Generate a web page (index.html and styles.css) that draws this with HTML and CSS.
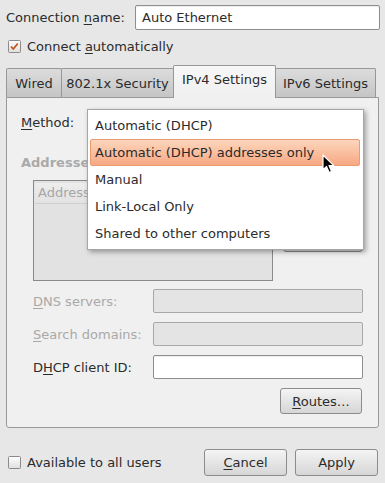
FILE: index.html
```html
<!DOCTYPE html>
<html>
<head>
<meta charset="utf-8">
<link rel="stylesheet" href="styles.css">
</head>
<body>
<div class="top">
  <div class="row-name">
    <span class="lbl">Connection <u>n</u>ame:</span>
    <div class="entry name-entry">Auto Ethernet</div>
  </div>
  <div class="row-check">
    <svg class="cb" width="13" height="13" viewBox="0 0 13 13">
      <defs><linearGradient id="g1" x1="0" y1="0" x2="0" y2="1"><stop offset="0" stop-color="#ffffff"/><stop offset="1" stop-color="#e2ddd8"/></linearGradient></defs>
      <rect x="0.5" y="0.5" width="12" height="12" rx="1" fill="url(#g1)" stroke="#8a8a8a"/>
      <path d="M3 6.5 L5.3 9 L9.8 3.5" fill="none" stroke="#c2561d" stroke-width="1.8"/>
    </svg>
    <span class="lbl">Connect <u>a</u>utomatically</span>
  </div>
  <div class="tabs">
    <div class="tab t1">Wired</div>
    <div class="tab t2">802.1x Security</div>
    <div class="tab t3 active">IPv4 Settings</div>
    <div class="tab t4">IPv6 Settings</div>
  </div>
  <div class="page">
    <div class="method-row"><span class="lbl"><u>M</u>ethod:</span></div>
    <div class="addr-label">Addresses</div>
    <div class="addr-area">
      <div class="addr-box">
        <div class="addr-head">Address</div>
      </div>
      <div class="addr-btns">
        <div class="btn small">Add</div>
        <div class="btn small">Delete</div>
      </div>
    </div>
    <div class="form-row"><span class="lbl dis"><u>D</u>NS servers:</span><div class="entry dis-entry"></div></div>
    <div class="form-row"><span class="lbl dis"><u>S</u>earch domains:</span><div class="entry dis-entry"></div></div>
    <div class="form-row"><span class="lbl">D<u>H</u>CP client ID:</span><div class="entry"></div></div>
    <div class="btn routes"><span><u>R</u>outes…</span></div>
  </div>
</div>
<div class="bottom">
  <svg class="cb" width="13" height="13" viewBox="0 0 13 13">
    <defs><linearGradient id="g2" x1="0" y1="0" x2="0" y2="1"><stop offset="0" stop-color="#ffffff"/><stop offset="1" stop-color="#dedede"/></linearGradient></defs>
    <rect x="0.5" y="0.5" width="12" height="12" rx="1" fill="url(#g2)" stroke="#8a8a8a"/>
  </svg>
  <span class="lbl avail">Available to all users</span>
  <div class="btn dlg cancel"><span><u>C</u>ancel</span></div>
  <div class="btn dlg apply"><span>Apply</span></div>
</div>

<div class="menu">
  <div class="item">Automatic (DHCP)</div>
  <div class="item hl">Automatic (DHCP) addresses only</div>
  <div class="item">Manual</div>
  <div class="item">Link-Local Only</div>
  <div class="item">Shared to other computers</div>
</div>
<svg class="cursor" width="14" height="20" viewBox="0 0 14 20">
  <path d="M1 1 L1 16 L4.5 12.5 L7.2 18.5 L9.6 17.4 L7 11.6 L11.8 11.6 Z" fill="#000" stroke="#fff" stroke-width="1.2" stroke-linejoin="round"/>
</svg>
</body>
</html>
```

FILE: styles.css
```css
html, body {
  margin: 0;
  padding: 0;
}
body {
  width: 385px;
  height: 483px;
  background: #e7e7e7;
  font-family: "DejaVu Sans", "Liberation Sans", sans-serif;
  font-size: 13px;
  color: #2b2b2b;
  overflow: hidden;
  position: relative;
}
u { text-decoration: underline; text-underline-offset: 2px; text-decoration-thickness: 1px; }

.top {
  padding: 5px 5px 0 6px;
}
.row-name {
  display: flex;
  align-items: center;
  height: 25px;
}
.entry {
  box-sizing: border-box;
  background: #ffffff;
  border: 1px solid #8e8e8e;
  border-radius: 2px;
  box-shadow: inset 0 1px 1px rgba(0,0,0,0.08);
  display: flex;
  align-items: center;
  padding-left: 6px;
}
.name-entry {
  margin-left: auto;
  width: 245px;
  height: 25px;
}
.row-check {
  display: flex;
  align-items: center;
  height: 24px;
  margin-top: 4px;
  padding-left: 2px;
}
.cb { display: block; flex: none; }
.row-check .lbl { margin-left: 6px; }

.tabs {
  display: flex;
  align-items: flex-end;
  height: 32px;
  margin-top: 7px;
}
.tab {
  box-sizing: border-box;
  height: 29px;
  border: 1px solid #979797;
  border-bottom: none;
  border-radius: 2px 2px 0 0;
  background: linear-gradient(#dcdcdc, #c5c5c5);
  display: flex;
  align-items: center;
  justify-content: center;
  margin-left: -1px;
}
.t1 { width: 56px; margin-left: 0; }
.t2 { width: 113px; }
.t3 { width: 103px; }
.t4 { width: 101px; }
.tab.active {
  height: 33px;
  margin-bottom: -1px;
  background: linear-gradient(#f7f7f7, #f0f0f0);
  position: relative;
  z-index: 1;
  padding-bottom: 5px;
}

.page {
  box-sizing: border-box;
  height: 331px;
  margin-right: 1px;
  border: 1px solid #999999;
  border-radius: 0 0 3px 3px;
  background: #f0f0f0;
  padding: 11px 15px 0 14px;
  display: flex;
  flex-direction: column;
}
.method-row {
  height: 27px;
  display: flex;
  align-items: center;
}
.addr-label {
  margin-top: 18px;
  height: 18px;
  line-height: 18px;
  font-weight: bold;
  color: #aaaaaa;
}
.addr-area {
  display: flex;
  margin-top: 8px;
  padding-left: 12px;
  height: 101px;
}
.addr-box {
  box-sizing: border-box;
  width: 240px;
  height: 101px;
  border: 1px solid #8a8a8a;
  background: #e2e2e2;
  padding: 2px 1px 0 1px;
}
.addr-head {
  height: 21px;
  box-sizing: border-box;
  background: linear-gradient(#ededed, #e2e2e2);
  border-bottom: 1px solid #cfcfcf;
  color: #a6a6a6;
  padding-left: 3px;
  line-height: 20px;
}
.addr-btns {
  margin-left: 10px;
  width: 80px;
  display: flex;
  flex-direction: column;
  gap: 18px;
}
.btn {
  box-sizing: border-box;
  border: 1px solid #8c8c8c;
  border-radius: 3px;
  background: linear-gradient(#f4f4f4, #d6d6d6);
  display: flex;
  align-items: center;
  justify-content: center;
}
.btn.small { height: 27px; }
.form-row {
  display: flex;
  align-items: center;
  height: 24px;
  padding-left: 12px;
  margin-top: 9px;
}
.addr-area + .form-row { margin-top: 8px; }
.form-row .lbl { width: 120px; flex: none; }
.form-row .entry { flex: 1; height: 24px; }
.lbl.dis { color: #a9a9a9; }
.entry.dis-entry {
  background: #e4e4e4;
  border-color: #a8a8a8;
  box-shadow: none;
}
.routes {
  align-self: flex-end;
  width: 82px;
  height: 26px;
  margin-top: 9px;
  margin-right: 1px;
}

.bottom {
  display: flex;
  align-items: center;
  height: 27px;
  margin-top: 21px;
  padding: 0 7px 0 8px;
}
.bottom .cb { margin-top: -1px; }
.avail { margin-left: 6px; }
.dlg { width: 83px; height: 27px; }
.cancel { margin-left: auto; }
.apply { margin-left: 8px; }

.menu {
  position: absolute;
  left: 87px;
  top: 109px;
  width: 277px;
  height: 141px;
  box-sizing: border-box;
  background: #ffffff;
  border: 1px solid #a6a6a6;
  padding: 2px 3px 2px 2px;
  box-shadow: 2px 2px 5px rgba(0,0,0,0.35);
  z-index: 5;
}
.item {
  box-sizing: border-box;
  height: 27px;
  display: flex;
  align-items: center;
  padding-left: 5px;
}
.item.hl {
  background: linear-gradient(#fcd6bd, #f8a882);
  border: 1px solid #eb9b70;
  border-radius: 2px;
  padding-left: 4px;
}
.cursor {
  position: absolute;
  left: 322px;
  top: 154px;
  z-index: 6;
}
```
